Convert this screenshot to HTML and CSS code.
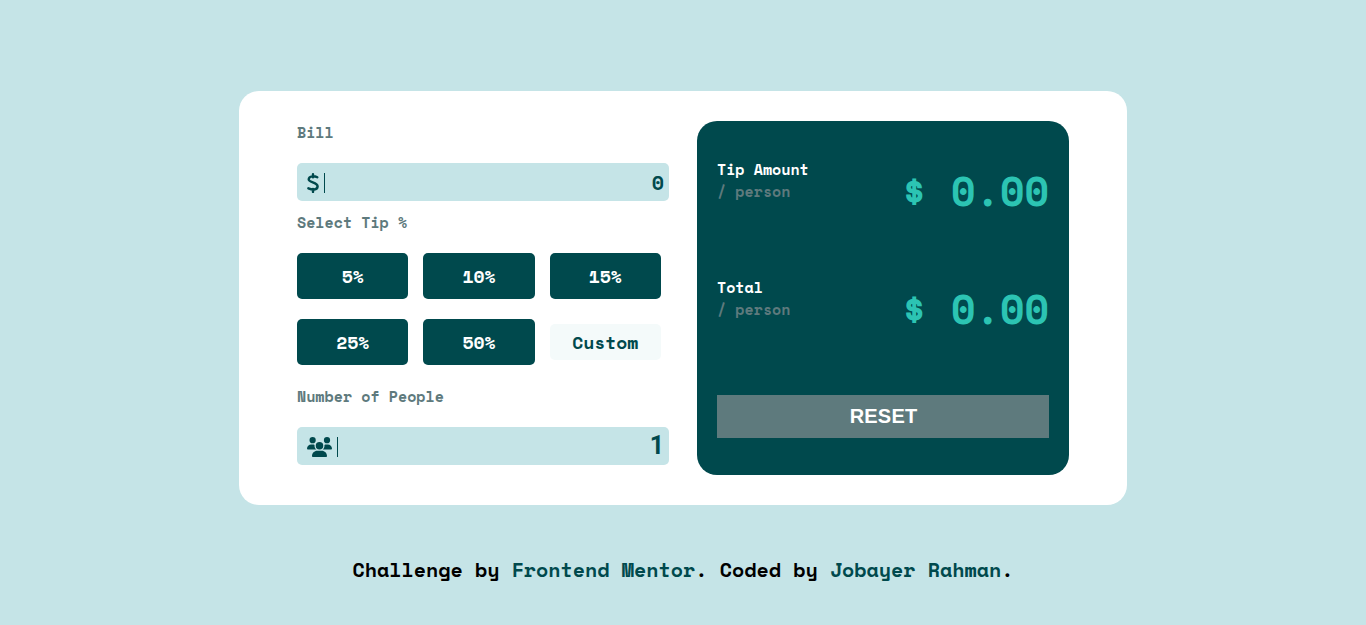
FILE: index.html
```html
<!DOCTYPE html>
<html lang="en">
<head>
<meta charset="utf-8">
<title>Tip calculator</title>
<link rel="stylesheet" href="styles.css">
</head>
<body>
<main class="card">
  <section class="form">
    <div class="label">Bill</div>
    <div class="field">
      <svg class="dollar" width="12" height="20" viewBox="0 0 12 20"><path d="M6 1.200v3M6 16v3M10.300 4.300C8 3.100 2 2.300 1.700 6.300C1.500 9.700 10.500 9.300 10.600 13.400C10.500 17.500 4.800 16.800 1.400 15.300" fill="none" stroke="currentColor" stroke-width="2.400" stroke-linecap="round" stroke-linejoin="round"/></svg>
      <span class="caret"></span>
      <span class="value">0</span>
    </div>
    <div class="label">Select Tip %</div>
    <div class="tips">
      <button class="tip">5%</button>
      <button class="tip">10%</button>
      <button class="tip">15%</button>
      <button class="tip">25%</button>
      <button class="tip">50%</button>
      <button class="tip custom">Custom</button>
    </div>
    <div class="label">Number of People</div>
    <div class="field">
      <svg class="people" width="25" height="20" viewBox="0 0 640 512"><path fill="currentColor" d="M144 0a80 80 0 1 1 0 160A80 80 0 1 1 144 0zM512 0a80 80 0 1 1 0 160A80 80 0 1 1 512 0zM0 298.700C0 239.800 47.800 192 106.700 192h42.700c15.900 0 31 3.500 44.600 9.700c-1.300 7.200-1.900 14.700-1.900 22.300c0 38.200 16.800 72.500 43.300 96H21.300C9.600 320 0 310.400 0 298.700zM405.300 320h-.7c26.600-23.500 43.300-57.800 43.300-96c0-7.600-.7-15-1.900-22.300c13.600-6.300 28.700-9.700 44.600-9.700h42.700C592.200 192 640 239.800 640 298.700c0 11.800-9.600 21.300-21.300 21.300zM224 224a96 96 0 1 1 192 0a96 96 0 1 1-192 0zM128 485.300C128 411.700 187.700 352 261.300 352h117.400C452.300 352 512 411.700 512 485.300c0 14.700-11.900 26.700-26.700 26.700H154.700c-14.700 0-26.700-11.900-26.700-26.700z"/></svg>
      <span class="caret"></span>
      <span class="value count">1</span>
    </div>
  </section>
  <section class="result">
    <div class="row">
      <div class="caption">Tip Amount<span class="per">/ person</span></div>
      <div class="amount">$ 0.00</div>
    </div>
    <div class="row">
      <div class="caption">Total<span class="per">/ person</span></div>
      <div class="amount">$ 0.00</div>
    </div>
    <button class="reset">RESET</button>
  </section>
</main>
<footer class="footer">Challenge by <a class="link">Frontend Mentor</a>. Coded by <a class="link">Jobayer Rahman</a>.</footer>
</body>
</html>
```
FILE: styles.css
```css
* { box-sizing: border-box; }
body {
  margin: 0;
  height: 625px;
  padding-top: 91px;
  overflow: hidden;
  background: #c5e4e7;
  font-family: "Space Mono", "Liberation Mono", monospace;
  font-weight: 700;
}
.card {
  display: flex;
  gap: 28px;
  width: 888px;
  height: 414px;
  margin: 0 auto;
  padding: 30px 58px;
  background: #fff;
  border-radius: 20px;
}
.form { width: 372px; }
.label {
  height: 22px;
  margin-bottom: 20px;
  color: #5e7a7d;
  font-size: 15px;
  line-height: 22px;
}
.field {
  display: flex;
  align-items: center;
  height: 38px;
  margin-bottom: 10px;
  padding: 1px 5px 0 10px;
  background: #c5e4e7;
  border-radius: 5px;
  color: #00494d;
}
.caret { width: 1px; height: 20px; margin-left: 5px; background: #00494d; }
.value { margin-left: auto; font-size: 20px; line-height: 36px; }
.count { height: 38px; font-family: Roboto, sans-serif; font-size: 25px; }
.tips {
  display: grid;
  grid-template-columns: repeat(3, 1fr);
  gap: 20px 15px;
  align-items: center;
  width: 364px;
  margin-bottom: 20px;
}
.tip {
  height: 46px;
  padding: 0;
  border: 0;
  border-radius: 5px;
  background: #00494d;
  color: #fff;
  font: 700 18px "Space Mono", "Liberation Mono", monospace;
}
.custom { height: 36px; background: #f4fafa; color: #00494d; }
.result {
  width: 372px;
  height: 354px;
  padding: 37px 20px 0;
  background: #00494d;
  border-radius: 20px;
}
.row {
  display: flex;
  justify-content: space-between;
  height: 44px;
  margin-bottom: 74px;
}
.caption { color: #fff; font-size: 15px; line-height: 22px; }
.per { display: block; color: #5e7a7d; }
.amount {
  padding-top: 11px;
  color: #2cc4b3;
  font-size: 40px;
  line-height: 44px;
}
.reset {
  display: block;
  width: 332px;
  height: 43px;
  margin-top: 75px;
  padding: 0;
  border: 0;
  background: #5e7a7d;
  color: #fff;
  font: 700 20px "Liberation Sans", sans-serif;
  letter-spacing: 0.200px;
  text-indent: 1px;
}
.footer {
  margin-top: 50px;
  text-align: center;
  font-size: 20px;
  line-height: 30px;
}
.link { color: #00494d; }
```
